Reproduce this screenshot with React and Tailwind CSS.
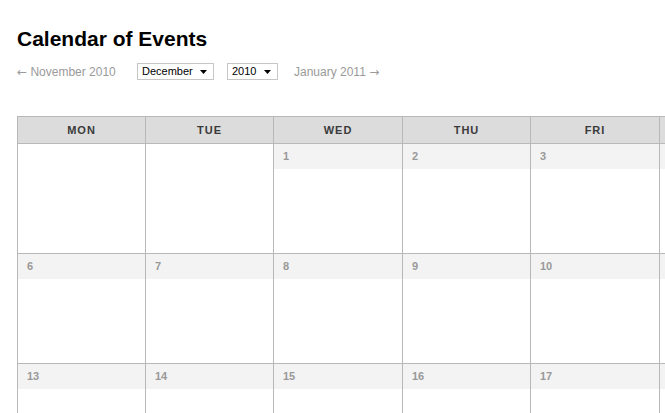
import React from "react";

const cols = ["w-[128px]", "w-[128px]", "w-[129px]", "w-[128px]", "w-[129px]", "w-[128px]", "w-[128px]"];
const heads = ["MON", "TUE", "WED", "THU", "FRI", "SAT", "SUN"];
const rows = [
  [null, null, 1, 2, 3, 4, 5],
  [6, 7, 8, 9, 10, 11, 12],
  [13, 14, 15, 16, 17, 18, 19],
];

function Caret() {
  return (
    <svg width="7" height="4" viewBox="0 0 7 4" className="block">
      <path d="M0 0H7L3.5 4Z" fill="#000" />
    </svg>
  );
}

function FakeSelect({ label, width }) {
  return (
    <div className={`${width} h-[17px] border border-[#c6c6c6] bg-white flex items-center justify-between pl-[4px] pr-[6px] text-[11px] leading-none text-black`}>
      <span>{label}</span>
      <Caret />
    </div>
  );
}

export default function App() {
  return (
    <div className="w-[665px] h-[413px] overflow-hidden bg-white font-['Liberation_Sans',Arial,sans-serif]">
      <div className="pl-[17px]">
        <h1 className="pt-[28px] text-[21px] leading-none font-bold text-black">Calendar of Events</h1>
        <div className="mt-[14px] h-[17px] flex items-center text-[12px] leading-none text-[#9a9a9a]">
          <span className="w-[103px] whitespace-nowrap">
            <span className="font-['DejaVu_Sans',sans-serif] text-[12px]">←</span> November 2010
          </span>
          <div className="ml-[17px]">
            <FakeSelect label="December" width="w-[77px]" />
          </div>
          <div className="ml-[13px]">
            <FakeSelect label="2010" width="w-[51px]" />
          </div>
          <span className="ml-[16px] whitespace-nowrap">
            January 2011 <span className="font-['DejaVu_Sans',sans-serif] text-[12px]">→</span>
          </span>
        </div>
        <div className="mt-[36px] w-[919px] border-l border-t border-[#b8b8b8]">
          <div className="flex bg-[#dcdcdc]">
            {heads.map((h, i) => (
              <div
                key={h}
                className={`${cols[i]} h-[27px] shrink-0 border-r border-b border-[#b8b8b8] flex items-center justify-center text-[11px] font-bold tracking-[1px] text-[#3a3a3a]`}
              >
                {h}
              </div>
            ))}
          </div>
          {rows.map((r, ri) => (
            <div key={ri} className="flex">
              {r.map((d, i) => (
                <div key={i} className={`${cols[i]} h-[110px] shrink-0 border-r border-b border-[#b8b8b8] bg-white`}>
                  {d !== null && (
                    <div className="h-[25px] bg-[#f3f3f3] pl-[9px] flex items-center text-[11px] font-bold text-[#999999]">
                      {d}
                    </div>
                  )}
                </div>
              ))}
            </div>
          ))}
        </div>
      </div>
    </div>
  );
}
